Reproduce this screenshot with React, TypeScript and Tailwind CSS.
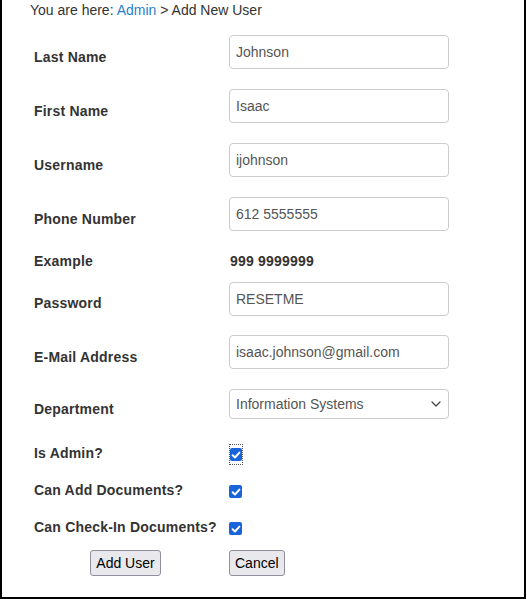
import type { ReactNode } from 'react';

const font = { fontFamily: '"Liberation Sans", Arial, sans-serif' };

function Checkbox({ focused = false }: { focused?: boolean }) {
  const box = (
    <span className="flex h-[13px] w-[13px] items-center justify-center rounded-[2px] bg-[#1a64da]">
      <svg width="10" height="10" viewBox="0 0 10 10" fill="none">
        <path
          d="M1.6 5.2 L4 7.5 L8.4 2.6"
          stroke="#fff"
          strokeWidth="1.9"
          strokeLinecap="round"
          strokeLinejoin="round"
        />
      </svg>
    </span>
  );

  if (!focused) return box;

  return (
    <span className="flex h-[21px] w-[14px] items-center justify-center border border-dotted border-[#555]">
      {box}
    </span>
  );
}

function Field({ value }: { value: string }) {
  return (
    <input
      readOnly
      value={value}
      className="h-[34px] w-[220px] rounded-[4px] border border-[#ccc] bg-white px-[6px] text-[14px] text-[#555] outline-none"
      style={font}
    />
  );
}

function Row({
  label,
  labelPad,
  height,
  children,
}: {
  label: ReactNode;
  labelPad: string;
  height: string;
  children: ReactNode;
}) {
  return (
    <div className={`grid grid-cols-[195px_1fr] ${height}`}>
      <div className={`px-[6px] ${labelPad}`}>
        <span className="block text-[14px] leading-[20px] font-bold tracking-[0.2px] text-[#333]">
          {label}
        </span>
      </div>
      <div className="px-[6px]">{children}</div>
    </div>
  );
}

export default function App() {
  return (
    <div
      className="h-[599px] w-[526px] border-x-2 border-b-2 border-black bg-white"
      style={font}
    >
      <div className="h-[20px] pl-[28px] text-[14px] leading-[20px] text-[#333]">
        You are here: <span className="text-[#2a7fcb]">Admin</span> &gt; Add
        New User
      </div>

      <div className="mt-[6px] flex flex-col pl-[26px]">
        <Row label="Last Name" labelPad="pt-[21px]" height="h-[54px]">
          <div className="pt-[9px]">
            <Field value="Johnson" />
          </div>
        </Row>
        <Row label="First Name" labelPad="pt-[21px]" height="h-[54px]">
          <div className="pt-[9px]">
            <Field value="Isaac" />
          </div>
        </Row>
        <Row label="Username" labelPad="pt-[21px]" height="h-[54px]">
          <div className="pt-[9px]">
            <Field value="ijohnson" />
          </div>
        </Row>
        <Row label="Phone Number" labelPad="pt-[21px]" height="h-[54px]">
          <div className="pt-[9px]">
            <Field value="612 5555555" />
          </div>
        </Row>
        <Row label="Example" labelPad="pt-[9px]" height="h-[30px]">
          <div className="pt-[9px] pl-[1px] text-[14px] leading-[20px] font-bold tracking-[0.2px] text-[#333]">
            999 9999999
          </div>
        </Row>
        <Row label="Password" labelPad="pt-[21px]" height="h-[54px]">
          <div className="pt-[10px]">
            <Field value="RESETME" />
          </div>
        </Row>
        <Row label="E-Mail Address" labelPad="pt-[21px]" height="h-[54px]">
          <div className="pt-[9px]">
            <Field value="isaac.johnson@gmail.com" />
          </div>
        </Row>
        <Row label="Department" labelPad="pt-[19px]" height="h-[54px]">
          <div className="pt-[9px]">
            <div className="flex h-[30px] w-[220px] items-center justify-between rounded-[4px] border border-[#ccc] bg-white pr-[7px] pl-[6px] text-[14px] text-[#555]">
              <span>Information Systems</span>
              <svg width="10" height="6" viewBox="0 0 10 6" fill="none">
                <path
                  d="M1 1 L5 5 L9 1"
                  stroke="#444"
                  strokeWidth="1.3"
                  strokeLinecap="round"
                  strokeLinejoin="round"
                />
              </svg>
            </div>
          </div>
        </Row>
        <Row label="Is Admin?" labelPad="pt-[9px]" height="h-[38px]">
          <div className="pt-[10px]">
            <Checkbox focused />
          </div>
        </Row>
        <Row label="Can Add Documents?" labelPad="pt-[8px]" height="h-[36px]">
          <div className="pt-[13px]">
            <Checkbox />
          </div>
        </Row>
        <Row label="Can Check-In Documents?" labelPad="pt-[9px]" height="h-[37px]">
          <div className="pt-[14px]">
            <Checkbox />
          </div>
        </Row>

        <div className="mt-[5px] grid grid-cols-[195px_1fr]">
          <div className="flex justify-center px-[6px]">
            <button className="h-[26px] rounded-[3px] border border-[#8f8f9d] bg-[#e9e9ed] px-[5px] text-[14px] text-black">
              Add User
            </button>
          </div>
          <div className="px-[6px]">
            <button className="h-[26px] rounded-[3px] border border-[#8f8f9d] bg-[#e9e9ed] px-[5px] text-[14px] text-black">
              Cancel
            </button>
          </div>
        </div>
      </div>
    </div>
  );
}
